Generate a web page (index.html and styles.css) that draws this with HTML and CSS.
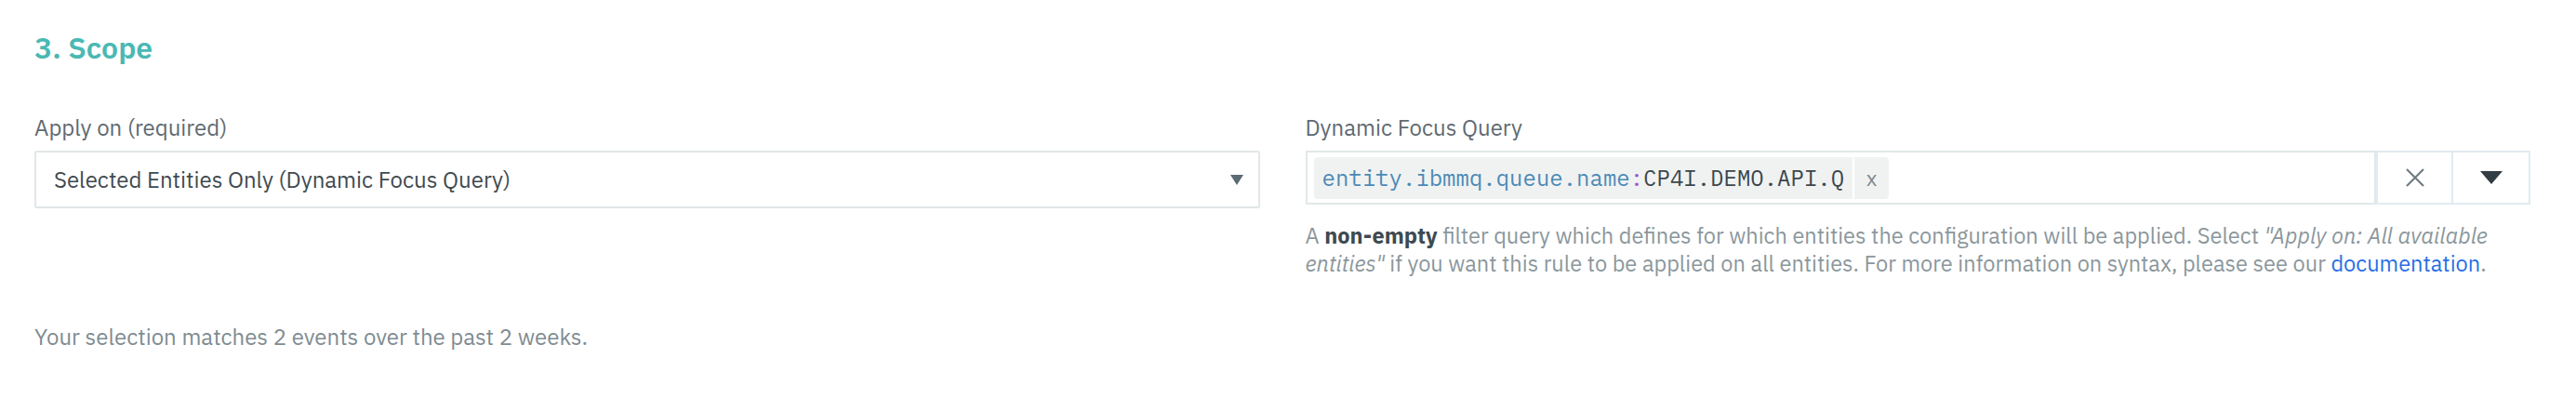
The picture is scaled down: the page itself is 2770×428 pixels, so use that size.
FILE: index.html
```html
<!DOCTYPE html>
<html lang="en">
<head>
<meta charset="utf-8">
<title>Scope</title>
<link rel="stylesheet" href="styles.css">
</head>
<body>
<section class="scope">
  <h2 class="title">3. Scope</h2>
  <div class="cols">
    <div class="field">
      <label class="label">Apply on (required)</label>
      <div class="select">
        <span class="select-text">Selected Entities Only (Dynamic Focus Query)</span>
        <svg class="caret" width="14" height="11" viewBox="0 0 14 11"><path d="M0 0H14L7 11Z" fill="#5d6b73"/></svg>
      </div>
    </div>
    <div class="field">
      <label class="label">Dynamic Focus Query</label>
      <div class="query">
        <div class="query-input">
          <span class="chip"><span class="chip-text"><span class="k">entity.ibmmq.queue.name</span><span class="c">:</span><span class="v">CP4I.DEMO.API.Q</span></span><span class="chip-x">x</span></span>
        </div>
        <button class="qbtn" type="button" aria-label="Clear">
          <svg width="22" height="22" viewBox="0 0 22 22"><path d="M2 2L20 20M20 2L2 20" stroke="#6f7d84" stroke-width="2.2" fill="none"/></svg>
        </button>
        <button class="qbtn" type="button" aria-label="Open">
          <svg width="24" height="14" viewBox="0 0 24 14"><path d="M0 0H24L12 14Z" fill="#333d44"/></svg>
        </button>
      </div>
      <p class="help">A <strong>non-empty</strong> filter query which defines for which entities the configuration will be applied. Select <em>"Apply on: All available entities"</em> if you want this rule to be applied on all entities. For more information on syntax, please see our <a href="#">documentation</a>.</p>
    </div>
  </div>
  <p class="match">Your selection matches 2 events over the past 2 weeks.</p>
</section>
</body>
</html>
```

FILE: styles.css
```css
html, body {
  margin: 0;
  padding: 0;
  background: #ffffff;
}

body {
  font-family: "IBM Plex Sans", Roboto, "Noto Sans", sans-serif;
  color: #3e4a50;
}

.scope {
  padding: 31px 49px 0 37px;
}

.title {
  margin: 0;
  font-size: 32px;
  line-height: 40px;
  font-weight: 600;
  color: #4ab8b4;
}

.cols {
  display: grid;
  grid-template-columns: 1fr 1fr;
  column-gap: 49px;
  margin-top: 51px;
}

.field {
  display: flex;
  flex-direction: column;
}

.label {
  font-size: 24px;
  line-height: 30px;
  color: #5f6a70;
  margin-bottom: 10px;
}

.select {
  box-sizing: border-box;
  height: 62px;
  border: 2px solid #e2e7e8;
  border-radius: 2px;
  display: flex;
  align-items: center;
  justify-content: space-between;
  padding: 0 16px 0 19px;
}

.select-text {
  font-size: 24px;
  color: #3f4a50;
}

.query {
  display: flex;
  height: 58px;
}

.query-input {
  flex: 1;
  box-sizing: border-box;
  border: 2px solid #e2e8e8;
  display: flex;
  align-items: center;
  padding: 0 7px;
}

.chip {
  display: flex;
  align-items: stretch;
  height: 45px;
  background: #f0f2f2;
  border-radius: 4px;
  font-family: "IBM Plex Mono", "Liberation Mono", monospace;
  font-size: 24px;
}

.chip-text {
  display: flex;
  align-items: center;
  padding: 0 9px;
  border-right: 2px solid #ffffff;
}

.k { color: #4b8ab5; }
.c { color: #9b59d0; }
.v { color: #3c474d; }

.chip-x {
  display: flex;
  align-items: center;
  padding: 0 12px;
  color: #7e8a90;
  font-size: 22px;
}

.qbtn {
  box-sizing: border-box;
  width: 83px;
  height: 58px;
  border: 2px solid #e0ebf0;
  border-left: none;
  background: #ffffff;
  display: flex;
  align-items: center;
  justify-content: center;
  padding: 0;
}

.qbtn:first-of-type {
  border-left: 2px solid #e0ebf0;
}

.help {
  margin: 18px 0 0;
  font-size: 23.6px;
  line-height: 30px;
  color: #8b979c;
}

.help strong {
  color: #3e4a50;
  font-weight: 700;
}

.help em {
  font-style: italic;
}

.help a {
  color: #2a6fe6;
  text-decoration: none;
}

.match {
  margin: 49px 0 0;
  font-size: 24px;
  line-height: 30px;
  color: #7f8c92;
}
```
